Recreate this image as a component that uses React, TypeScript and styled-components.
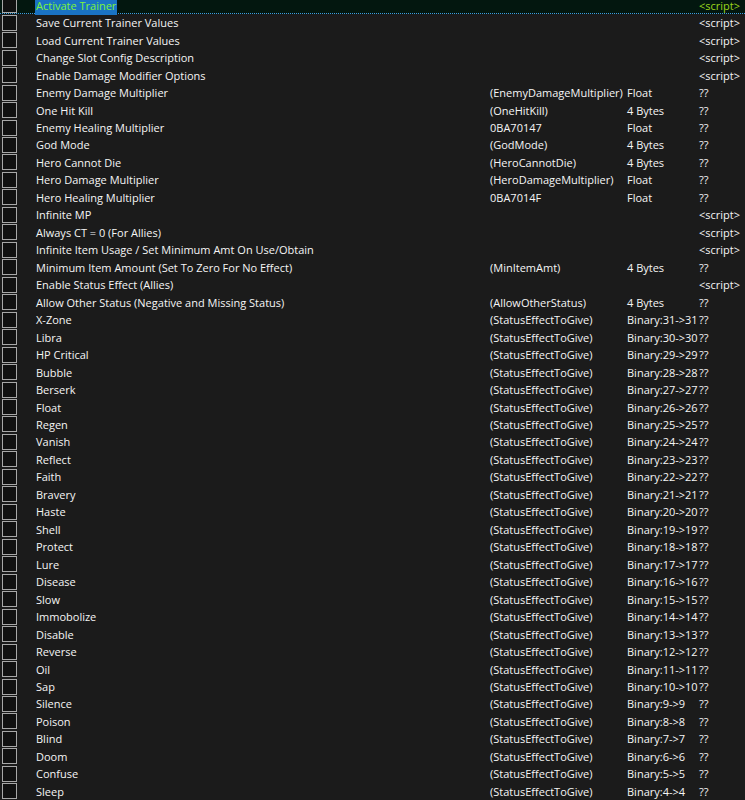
import React from 'react';
import styled, { createGlobalStyle } from 'styled-components';

type Entry = {
    name: string;
    address?: string;
    type?: string;
    value: string;
};

const status = [
    'X-Zone', 'Libra', 'HP Critical', 'Bubble', 'Berserk', 'Float', 'Regen', 'Vanish',
    'Reflect', 'Faith', 'Bravery', 'Haste', 'Shell', 'Protect', 'Lure', 'Disease',
    'Slow', 'Immobolize', 'Disable', 'Reverse', 'Oil', 'Sap', 'Silence', 'Poison',
    'Blind', 'Doom', 'Confuse', 'Sleep',
];

const entries: Entry[] = [
    { name: 'Activate Trainer', value: '<script>' },
    { name: 'Save Current Trainer Values', value: '<script>' },
    { name: 'Load Current Trainer Values', value: '<script>' },
    { name: 'Change Slot Config Description', value: '<script>' },
    { name: 'Enable Damage Modifier Options', value: '<script>' },
    { name: 'Enemy Damage Multiplier', address: '(EnemyDamageMultiplier)', type: 'Float', value: '??' },
    { name: 'One Hit Kill', address: '(OneHitKill)', type: '4 Bytes', value: '??' },
    { name: 'Enemy Healing Multiplier', address: '0BA70147', type: 'Float', value: '??' },
    { name: 'God Mode', address: '(GodMode)', type: '4 Bytes', value: '??' },
    { name: 'Hero Cannot Die', address: '(HeroCannotDie)', type: '4 Bytes', value: '??' },
    { name: 'Hero Damage Multiplier', address: '(HeroDamageMultiplier)', type: 'Float', value: '??' },
    { name: 'Hero Healing Multiplier', address: '0BA7014F', type: 'Float', value: '??' },
    { name: 'Infinite MP', value: '<script>' },
    { name: 'Always CT = 0 (For Allies)', value: '<script>' },
    { name: 'Infinite Item Usage / Set Minimum Amt On Use/Obtain', value: '<script>' },
    { name: 'Minimum Item Amount (Set To Zero For No Effect)', address: '(MinItemAmt)', type: '4 Bytes', value: '??' },
    { name: 'Enable Status Effect (Allies)', value: '<script>' },
    { name: 'Allow Other Status (Negative and Missing Status)', address: '(AllowOtherStatus)', type: '4 Bytes', value: '??' },
    ...status.map((name, i) => {
        const bit = 31 - i;
        return {
            name,
            address: '(StatusEffectToGive)',
            type: `Binary:${bit}->${bit}`,
            value: '??',
        };
    }),
];

const GlobalStyle = createGlobalStyle`
    html, body {
        margin: 0;
        padding: 0;
        background: #1b1b1b;
        overflow: hidden;
    }
`;

function App() {
    return (
        <>
            <GlobalStyle />
            <Table>
                {entries.map((entry, i) => (
                    <Row key={i} $active={i === 0}>
                        <CheckCell>
                            <CheckBox />
                        </CheckCell>
                        <Cell>
                            {i === 0 ? <Selected>{entry.name}</Selected> : entry.name}
                        </Cell>
                        <Cell>{entry.address}</Cell>
                        <Cell>{entry.type}</Cell>
                        <ValueCell $active={i === 0}>{entry.value}</ValueCell>
                    </Row>
                ))}
            </Table>
        </>
    );
}

export default App;

const Table = styled.div`
    margin-top: -3.5px;
    font-family: 'Segoe UI', 'Open Sans', 'Noto Sans', sans-serif;
    font-size: 11px;
    color: #f5f5f5;
`;

const Row = styled.div<{ $active: boolean }>`
    display: grid;
    grid-template-columns: 36px 454px 137px 72px 1fr;
    align-items: center;
    height: 17.47px;
    background: ${p => p.$active ? '#03170f' : 'transparent'};
    color: ${p => p.$active ? '#7df33a' : '#f5f5f5'};
    border-bottom: ${p => p.$active ? '1px dotted #3d9be0' : 'none'};
    box-sizing: border-box;
`;

const CheckCell = styled.div`
    display: flex;
    align-items: center;
    padding-left: 2px;
`;

const CheckBox = styled.span`
    display: block;
    width: 13px;
    height: 14px;
    border: 1px solid #a8a8a8;
    background: #111111;
`;

const Cell = styled.div`
    white-space: nowrap;
    line-height: 17px;
    min-width: 0;
`;

const Selected = styled.span`
    background: #1a73c4;
    padding: 1px 1px 2px;
    margin-left: -1px;
`;

const ValueCell = styled(Cell)<{ $active: boolean }>`
    color: ${p => p.$active ? '#9bd61c' : '#f5f5f5'};
`;
